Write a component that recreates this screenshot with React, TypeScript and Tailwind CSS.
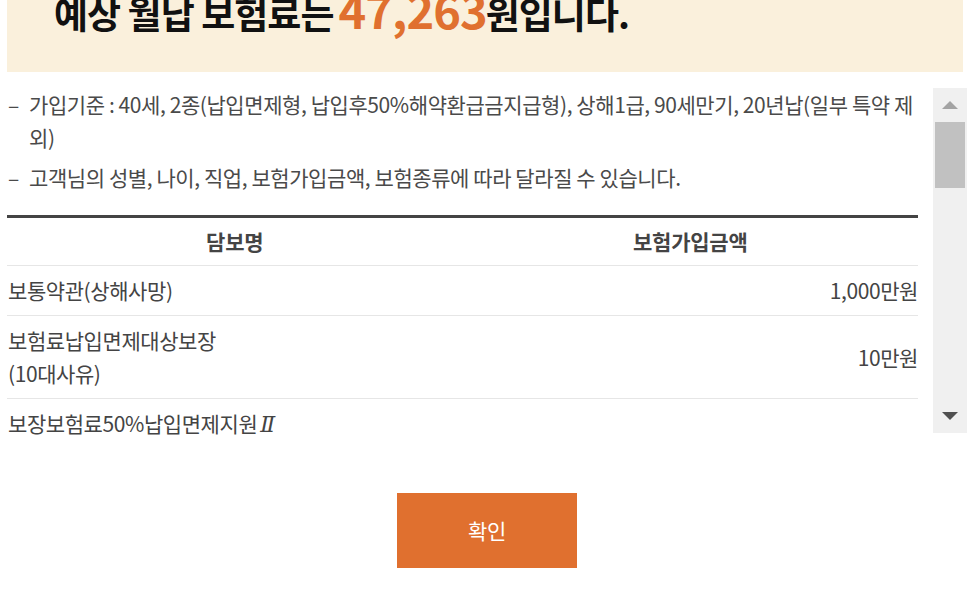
const font = "font-['Noto_Sans_CJK_KR','Noto_Sans',sans-serif]";

const notes = [
  "가입기준 : 40세, 2종(납입면제형, 납입후50%해약환급금지급형), 상해1급, 90세만기, 20년납(일부 특약 제외)",
  "고객님의 성별, 나이, 직업, 보험가입금액, 보험종류에 따라 달라질 수 있습니다.",
];

const rows: { name: string[]; amount: string; mark?: boolean }[] = [
  { name: ["보통약관(상해사망)"], amount: "1,000만원" },
  { name: ["보험료납입면제대상보장", "(10대사유)"], amount: "10만원" },
  { name: ["보장보험료50%납입면제지원"], amount: "", mark: true },
];

function ScrollBar() {
  return (
    <div className="w-[34px] h-[345px] shrink-0 bg-[#f0f0f0] flex flex-col items-center">
      <div className="h-[34px] flex items-center justify-center">
        <div className="w-0 h-0 border-l-[8px] border-r-[8px] border-b-[8px] border-l-transparent border-r-transparent border-b-[#a3a3a3]" />
      </div>
      <div className="w-[30px] h-[66px] bg-[#c1c1c1]" />
      <div className="flex-1" />
      <div className="h-[34px] flex items-center justify-center">
        <div className="w-0 h-0 border-l-[8px] border-r-[8px] border-t-[8px] border-l-transparent border-r-transparent border-t-[#505050]" />
      </div>
    </div>
  );
}

export default function App() {
  return (
    <div className={`${font} w-[970px] h-[592px] overflow-hidden bg-white text-[#444]`}>
      <div className="mx-[7px] h-[72px] bg-[#faf0dc] overflow-hidden">
        <h1 className="-mt-[26px] pl-[47px] flex items-baseline text-[#111] font-bold tracking-[-0.06em]">
          <span className="text-[37px]">예상 월납 보험료는</span>
          <span className="text-[47px] text-[#e0702f] ml-[5px] -mr-[1px]">47,263</span>
          <span className="text-[37px]">원입니다.</span>
        </h1>
      </div>

      <div className="flex items-start ml-[7px] mr-[3px] mt-[16px]">
        <div className="flex-1 h-[349px] overflow-hidden pr-[15px]">
          <ul className="text-[21px] leading-[33px] tracking-[-0.02em] text-[#4a4a4a]">
            {notes.map((n, i) => (
              <li key={i} className="flex mb-[7px]">
                <span className="w-[22px] shrink-0 pl-[1px]">–</span>
                <span className="flex-1">{n}</span>
              </li>
            ))}
          </ul>

          <div className="mt-[21px] border-t-[3px] border-[#444]">
            <div className="flex h-[48px] items-center border-b border-[#e6e6e6] text-[21px] font-bold tracking-[-0.01em] text-[#444]">
              <div className="w-1/2 text-center">담보명</div>
              <div className="w-1/2 text-center">보험가입금액</div>
            </div>
            {rows.map((r, i) => (
              <div
                key={i}
                className="flex items-center border-b border-[#e6e6e6] py-[8px] text-[21px] leading-[33px] tracking-[-0.02em] text-[#444]"
              >
                <div className="flex-1 pl-[1px]">
                  {r.name.map((l, j) => (
                    <div key={j}>
                      {l}
                      {r.mark && (
                        <span className="ml-[3px] italic text-[22px] font-['DejaVu_Serif',serif]">Ⅱ</span>
                      )}
                    </div>
                  ))}
                </div>
                <div className="text-right">{r.amount}</div>
              </div>
            ))}
          </div>
        </div>
        <ScrollBar />
      </div>

      <div className="flex justify-center mt-[56px]">
        <button className="w-[180px] h-[75px] bg-[#e0702f] text-white text-[21px] tracking-[-0.02em] ml-[4px]">
          확인
        </button>
      </div>
    </div>
  );
}
